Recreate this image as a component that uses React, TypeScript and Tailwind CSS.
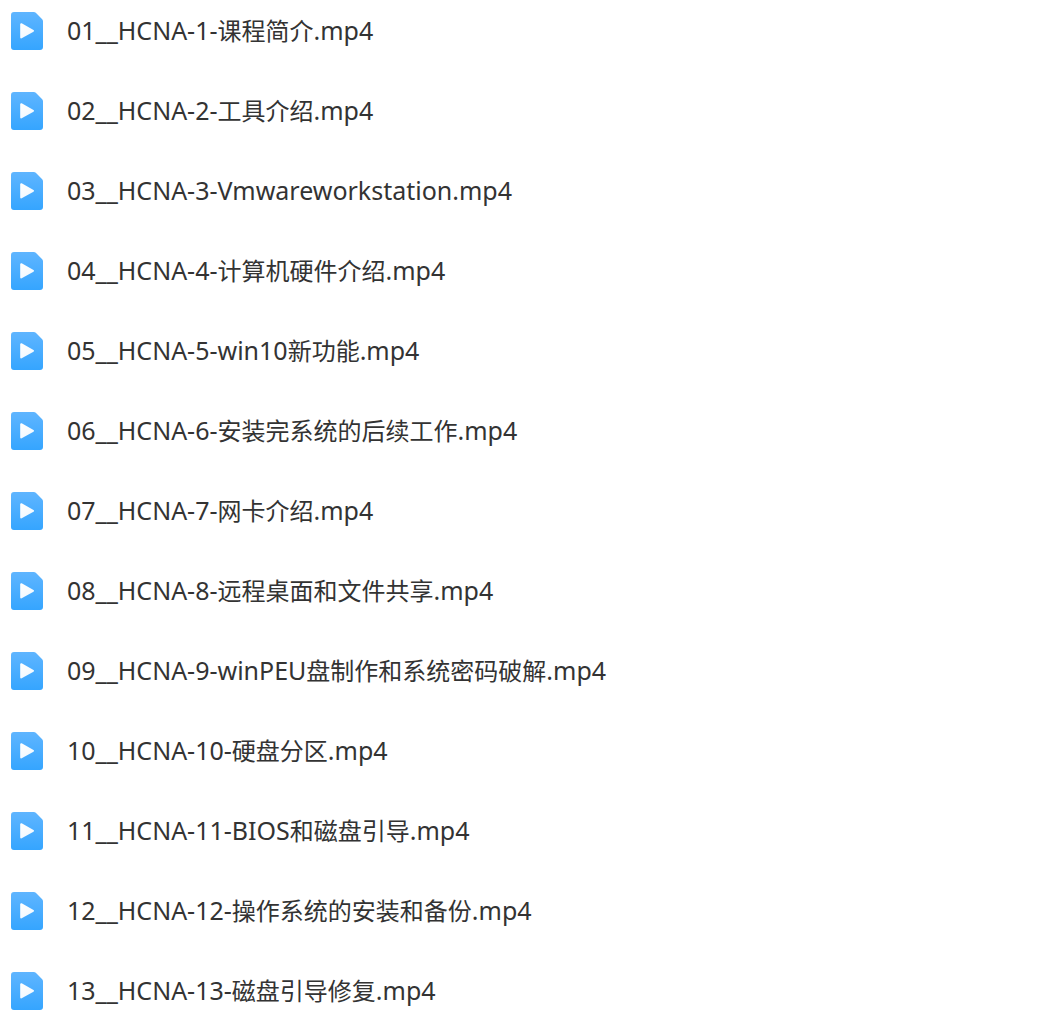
import React from 'react';

interface VideoFile {
  id: number;
  name: string;
}

const files: VideoFile[] = [
  { id: 1, name: '01__HCNA-1-课程简介.mp4' },
  { id: 2, name: '02__HCNA-2-工具介绍.mp4' },
  { id: 3, name: '03__HCNA-3-Vmwareworkstation.mp4' },
  { id: 4, name: '04__HCNA-4-计算机硬件介绍.mp4' },
  { id: 5, name: '05__HCNA-5-win10新功能.mp4' },
  { id: 6, name: '06__HCNA-6-安装完系统的后续工作.mp4' },
  { id: 7, name: '07__HCNA-7-网卡介绍.mp4' },
  { id: 8, name: '08__HCNA-8-远程桌面和文件共享.mp4' },
  { id: 9, name: '09__HCNA-9-winPEU盘制作和系统密码破解.mp4' },
  { id: 10, name: '10__HCNA-10-硬盘分区.mp4' },
  { id: 11, name: '11__HCNA-11-BIOS和磁盘引导.mp4' },
  { id: 12, name: '12__HCNA-12-操作系统的安装和备份.mp4' },
  { id: 13, name: '13__HCNA-13-磁盘引导修复.mp4' },
];

const VideoIcon: React.FC = () => (
  <svg className="w-8 h-[38px] shrink-0" viewBox="0 0 32 38" fill="none" aria-hidden="true">
    <defs>
      <linearGradient id="file-fill" x1="0" y1="0" x2="0" y2="38" gradientUnits="userSpaceOnUse">
        <stop stopColor="#5fb5ff" />
        <stop offset="1" stopColor="#35a5ff" />
      </linearGradient>
      <linearGradient id="play-fill" x1="10" y1="12" x2="20" y2="26" gradientUnits="userSpaceOnUse">
        <stop stopColor="#fff" />
        <stop offset="1" stopColor="#f0f8ff" />
      </linearGradient>
    </defs>
    <path
      d="M3 0H22.8Q24 0 24.8 .8L31.2 7.2Q32 8 32 9.2V35A3 3 0 0 1 29 38H3A3 3 0 0 1 0 35V3A3 3 0 0 1 3 0Z"
      fill="url(#file-fill)"
    />
    <path
      d="M10.2 12.2V25.4L22 18.8Z"
      fill="url(#play-fill)"
      stroke="url(#play-fill)"
      strokeWidth="2"
      strokeLinejoin="round"
    />
  </svg>
);

// Chinese glyphs fill their whole box, so they are set one pixel smaller than the Latin text
const FileName: React.FC<{ name: string }> = ({ name }) => (
  <span className="text-[25px] leading-9 whitespace-nowrap">
    {name.split(/(\p{Script=Han}+)/u).map((part, i) =>
      i % 2 === 1 ? <span key={i} className="text-[24px]">{part}</span> : part
    )}
  </span>
);

export default function App() {
  return (
    <main className="bg-white px-[11px] pb-3 font-['Noto_Sans','Noto_Sans_CJK_SC',sans-serif] text-[#333]">
      <ul>
        {files.map((file) => (
          <li key={file.id} className="flex h-20 items-start gap-6 pt-3">
            <VideoIcon />
            <FileName name={file.name} />
          </li>
        ))}
      </ul>
    </main>
  );
}
